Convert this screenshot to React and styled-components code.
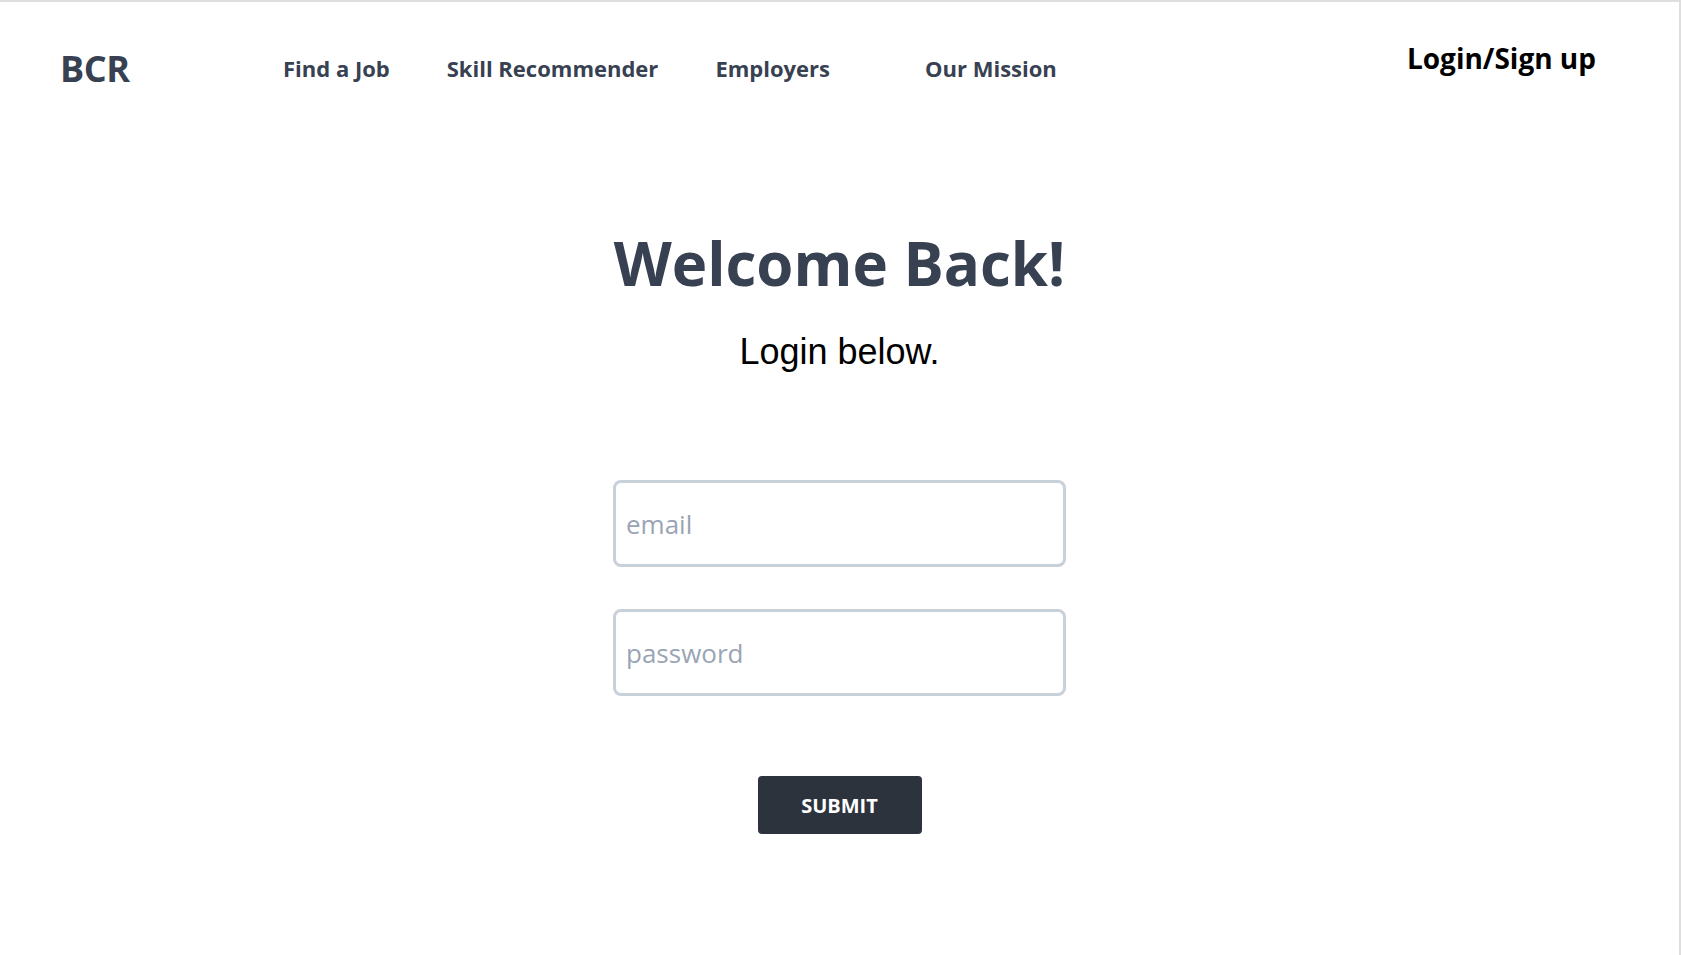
import React from 'react'
import styled, { createGlobalStyle } from 'styled-components'

const GlobalStyle = createGlobalStyle`
  *{
    box-sizing: border-box;
  }
  body{
    margin: 0;
    background: white;
    font-family: 'Open Sans', sans-serif;
  }
`

const navLinks = [
  { label: 'Find a Job', extra: 0 },
  { label: 'Skill Recommender', extra: 0 },
  { label: 'Employers', extra: 0 },
  { label: 'Our Mission', extra: 38 },
]

const App = () => {
  return (
    <>
      <GlobalStyle />
      <Page>
        <Header>
          <Logo>BCR</Logo>
          <Nav>
            {navLinks.map((item) =>
              <NavLink key={item.label} href='#' extra={item.extra}>{item.label}</NavLink>
            )}
          </Nav>
          <AuthLink href='#'>Login/Sign up</AuthLink>
        </Header>
        <Main>
          <Title>Welcome Back!</Title>
          <Subtitle>Login below.</Subtitle>
          <Form onSubmit={(e) => e.preventDefault()}>
            <Field type='email' placeholder='email' />
            <Field type='password' placeholder='password' />
            <SubmitButton type='submit'>SUBMIT</SubmitButton>
          </Form>
        </Main>
      </Page>
    </>
  )
}

const Page = styled.div`
  min-height: 100vh;
  border-top: 2px solid #dedede;
  border-right: 2px solid #dedede;
  display: flex;
  flex-direction: column;
`

const Header = styled.header`
  height: 131px;
  display: flex;
  align-items: center;
  padding: 0 83px 0 60px;
`

const Logo = styled.div`
  width: 223px;
  flex-shrink: 0;
  margin-top: 2px;
  font-size: 36px;
  font-weight: 700;
  color: #374151;
  letter-spacing: -0.5px;
`

const Nav = styled.nav`
  display: flex;
  align-items: center;
  gap: 57px;
`

const NavLink = styled.a`
  margin-left: ${props => props.extra}px;
  font-size: 22px;
  font-weight: 700;
  color: #374151;
  text-decoration: none;
`

const AuthLink = styled.a`
  margin-left: auto;
  margin-bottom: 19px;
  font-size: 28px;
  font-weight: 700;
  color: #000;
  text-decoration: none;
`

const Main = styled.main`
  display: flex;
  flex-direction: column;
  align-items: center;
  padding-top: 94px;
`

const Title = styled.h1`
  margin: 0;
  font-size: 60px;
  line-height: 72px;
  font-weight: 700;
  color: #374151;
`

const Subtitle = styled.p`
  margin: 31px 0 0;
  font-family: 'Liberation Sans', Arial, sans-serif;
  font-size: 36px;
  line-height: 43px;
  color: #000;
`

const Form = styled.form`
  margin-top: 107px;
  display: flex;
  flex-direction: column;
  align-items: center;
  gap: 42px;
`

const Field = styled.input`
  width: 453px;
  height: 87px;
  border: 3px solid #c8d0d9;
  border-radius: 8px;
  padding: 0 10px;
  font-family: 'Open Sans', sans-serif;
  font-size: 26px;
  color: #374151;
  outline: none;
  background: white;

  &::placeholder{
    color: #9aa5b4;
  }
`

const SubmitButton = styled.button`
  margin-top: 38px;
  width: 164px;
  height: 58px;
  border: none;
  border-radius: 4px;
  background-color: #2d333d;
  color: white;
  font-family: 'Open Sans', sans-serif;
  font-size: 20px;
  font-weight: 700;
  cursor: pointer;
`

export default App
